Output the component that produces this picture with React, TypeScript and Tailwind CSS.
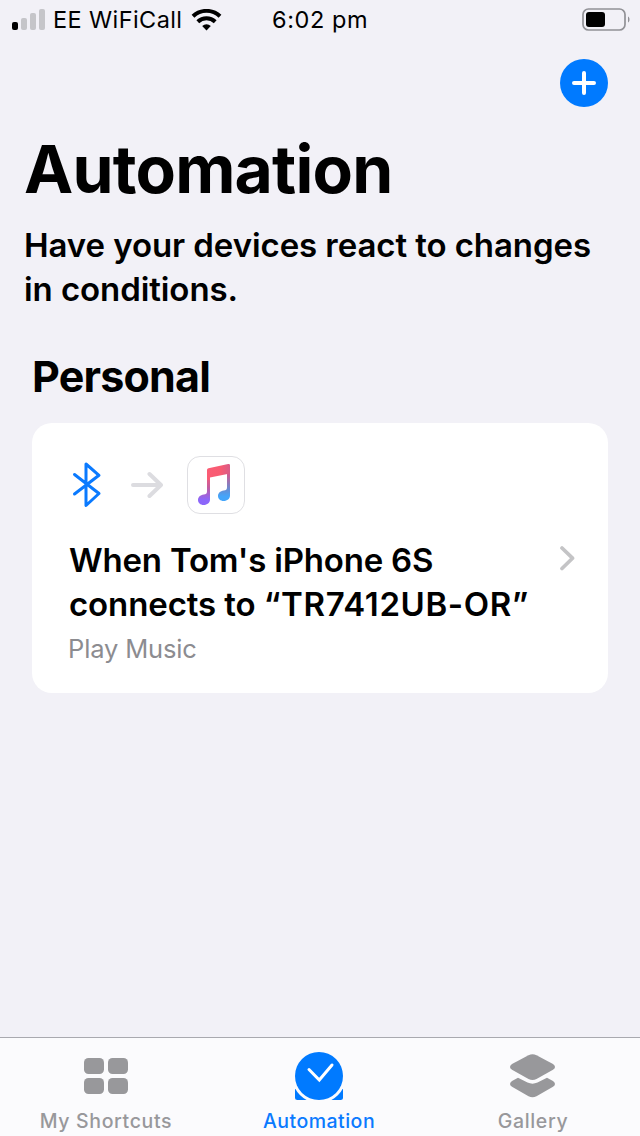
import type { ReactNode } from "react";

function StatusBar() {
  return (
    <header className="grid h-10 grid-cols-[272px_1fr_auto] items-center text-[23.5px] leading-10 text-black">
      <div className="flex h-10 items-center pl-3">
        <svg width="34" height="22" viewBox="0 0 34 22">
          <rect x="0" y="13" width="6" height="8" rx="2" fill="#000" />
          <rect x="9" y="9" width="6" height="12" rx="2" fill="#c5c5c9" />
          <rect x="18" y="4" width="6" height="17" rx="2" fill="#c5c5c9" />
          <rect x="27" y="0" width="6" height="21" rx="2" fill="#c5c5c9" />
        </svg>
        <span className="ml-[7px] w-[130px] whitespace-nowrap tracking-[0.4px]">EE WiFiCall</span>
        <svg className="ml-2" width="32" height="22" viewBox="0 0 32 22">
          <g fill="none" stroke="#000" strokeWidth="4">
            <path d="M2 7.3a19.5 19.5 0 0 1 27 0" />
            <path d="M6.8 12.7a12.6 12.6 0 0 1 17.4 0" />
          </g>
          <path d="M11.2 17a6.4 6.4 0 0 1 8.6 0l-4.3 4.4z" fill="#000" />
        </svg>
      </div>
      <span className="whitespace-nowrap tracking-[0.6px]">6:02 pm</span>
      <svg className="mr-2" width="50" height="24" viewBox="0 0 50 24">
        <rect x="1" y="1" width="42" height="21" rx="5.5" fill="none" stroke="#919196" strokeWidth="1.7" />
        <rect x="4" y="4" width="19" height="15" rx="3" fill="#000" />
        <path d="M46 8.5c2 .8 2 5.2 0 6z" fill="#919196" />
      </svg>
    </header>
  );
}

function BluetoothIcon() {
  return (
    <svg width="30" height="48" viewBox="0 0 30 48" fill="none" stroke="#0a7aff" strokeWidth="3" strokeLinecap="round" strokeLinejoin="round">
      <path d="M2.500 13.500 27 32.500 14 44.500V3L27 14.300 2.500 33" />
    </svg>
  );
}

function MusicIcon() {
  return (
    <svg width="58" height="58" viewBox="0 0 58 58">
      <defs>
        <linearGradient id="stemLeft" x1="0" y1="8" x2="0" y2="50" gradientUnits="userSpaceOnUse">
          <stop offset="0.25" stopColor="#fb5c74" />
          <stop offset="0.55" stopColor="#c45c9e" />
          <stop offset="0.85" stopColor="#8c66fa" />
        </linearGradient>
        <linearGradient id="stemRight" x1="0" y1="8" x2="0" y2="46" gradientUnits="userSpaceOnUse">
          <stop offset="0" stopColor="#f0587f" />
          <stop offset="0.3" stopColor="#c95e96" />
          <stop offset="0.65" stopColor="#6b8bd0" />
          <stop offset="0.85" stopColor="#44a5fa" />
        </linearGradient>
        <linearGradient id="beam" x1="20" y1="0" x2="43" y2="0" gradientUnits="userSpaceOnUse">
          <stop offset="0" stopColor="#fb5c74" />
          <stop offset="0.6" stopColor="#f75b72" />
          <stop offset="1" stopColor="#d85b88" />
        </linearGradient>
      </defs>
      <rect x="0.5" y="0.5" width="57" height="57" rx="12.5" fill="#fff" stroke="#dfdfe3" />
      <path d="M20 15h3v28.500c0 3.200-2.800 5.500-6.300 5.500-3.500 0-5.700-2.200-5.700-5 0-2.900 2.200-5.200 5.700-5.600 2.300-.3 3.300-.8 3.300-3z" fill="url(#stemLeft)" />
      <path d="M40 10h3v29.500c0 3.200-2.800 5.500-6.300 5.500-3.500 0-5.700-2.200-5.700-5 0-2.900 2.200-5.200 5.700-5.600 2.300-.3 3.300-.8 3.300-3z" fill="url(#stemRight)" />
      <path d="M20 14.200c0-1.100.5-1.800 1.500-2L41.200 8.100c1.200-.2 1.800.3 1.800 1.500v8L23 21.500V24h-3z" fill="url(#beam)" />
    </svg>
  );
}

function AutomationCard() {
  return (
    <button className="flex h-[270px] w-[576px] flex-col rounded-[20px] bg-white pt-[33px] pl-9 text-left">
      <div className="flex h-[58px] items-center">
        <div className="ml-1 flex w-[58px] items-center">
          <BluetoothIcon />
        </div>
        <svg className="ml-px" width="32" height="28" viewBox="0 0 32 28" fill="none" stroke="#dcdce0" strokeWidth="4" strokeLinecap="round" strokeLinejoin="round">
          <path d="M2 14h28M18.500 3 30 14 18.500 25" />
        </svg>
        <div className="ml-6">
          <MusicIcon />
        </div>
      </div>
      <div className="mt-6 flex">
        <div className="w-[491px] pl-px whitespace-nowrap text-[33px] leading-[44px] font-semibold text-black">
          <p className="tracking-[-0.2px]">When Tom's iPhone 6S</p>
          <p className="tracking-[-0.1px]">
            connects to <span className="tracking-[0.6px]">“TR7412UB-OR”</span>
          </p>
        </div>
        <svg className="mt-[7px]" width="18" height="26" viewBox="0 0 18 26" fill="none" stroke="#c4c4c6" strokeWidth="3.7" strokeLinecap="round" strokeLinejoin="round">
          <path d="M3 3 13.500 13.200 3 23.500" />
        </svg>
      </div>
      <p className="mt-[7px] text-[25.5px] leading-8 tracking-[-0.15px] text-[#8c8c90]">Play Music</p>
    </button>
  );
}

function Tab({ label, labelClass, children }: { label: string; labelClass: string; children: ReactNode }) {
  return (
    <button className="flex flex-col items-center pt-3">
      <div className="flex h-[52px] items-start">{children}</div>
      <span className={`mt-[7px] whitespace-nowrap text-[19.5px] leading-6 font-medium ${labelClass}`}>{label}</span>
    </button>
  );
}

export default function App() {
  return (
    <div className="flex h-[1136px] w-[640px] flex-col overflow-hidden bg-[#f2f1f7] font-['Inter',sans-serif]">
      <StatusBar />
      <div className="flex h-[67px] justify-end pt-[19px] pr-8">
        <button className="h-12 w-12" aria-label="Add">
          <svg width="48" height="48" viewBox="0 0 48 48">
            <circle cx="24" cy="24" r="24" fill="#007aff" />
            <path d="M14 24h20M24 14v20" stroke="#fff" strokeWidth="4" strokeLinecap="round" />
          </svg>
        </button>
      </div>
      <main className="flex flex-1 flex-col">
        <h1 className="mt-[22px] ml-6 text-[66px] leading-[80px] font-bold tracking-[-0.8px]">Automation</h1>
        <p className="mt-[14px] ml-6 text-[33px] leading-[44px] font-semibold tracking-[-0.08px] whitespace-nowrap">
          Have your devices react to changes
          <br />
          in conditions.
        </p>
        <h2 className="mt-10 ml-8 text-[43px] leading-[50px] font-bold tracking-[-0.8px]">Personal</h2>
        <section className="mt-[22px] ml-8">
          <AutomationCard />
        </section>
      </main>
      <nav className="grid h-[99px] grid-cols-[212px_214px_214px] border-t border-[#a9a9af] bg-[#fbfbfd]">
        <Tab label="My Shortcuts" labelClass="tracking-[0.65px] text-[#98989b]">
          <svg className="mt-2" width="44" height="36" viewBox="0 0 44 36" fill="#98989b">
            <rect width="20" height="16" rx="4.500" />
            <rect x="24" width="20" height="16" rx="4.500" />
            <rect y="20" width="20" height="16" rx="4.500" />
            <rect x="24" y="20" width="20" height="16" rx="4.500" />
          </svg>
        </Tab>
        <Tab label="Automation" labelClass="tracking-[0.5px] text-[#0a7aff]">
          <svg className="mt-0.5" width="48" height="48" viewBox="0 0 48 48">
            <rect y="34" width="48" height="14" rx="2.500" fill="#007aff" />
            <circle cx="24" cy="24" r="27" fill="#fbfbfd" />
            <circle cx="24" cy="24" r="24" fill="#007aff" />
            <path d="M14 17.500 24.300 28 37 13" fill="none" stroke="#fff" strokeWidth="3" strokeLinecap="round" />
          </svg>
        </Tab>
        <Tab label="Gallery" labelClass="tracking-[0.65px] text-[#98989b]">
          <svg className="mt-1 mr-px" width="46" height="44" viewBox="0 0 46 44" fill="#98989b">
            <path d="M18.500 1.200q4-2 8 0L43 10q4 2.900 0 5.800L26.500 25q-4 2.200-8 0L2 15.800q-4-2.900 0-5.800z" />
            <path d="M8 23.700 17.500 28.600q5 2.200 10 0L37 23.700 43 27q4 2.900 0 5.800L26.500 42.200q-4 2-8 0L2 32.800q-4-2.900 0-5.800z" />
          </svg>
        </Tab>
      </nav>
    </div>
  );
}
